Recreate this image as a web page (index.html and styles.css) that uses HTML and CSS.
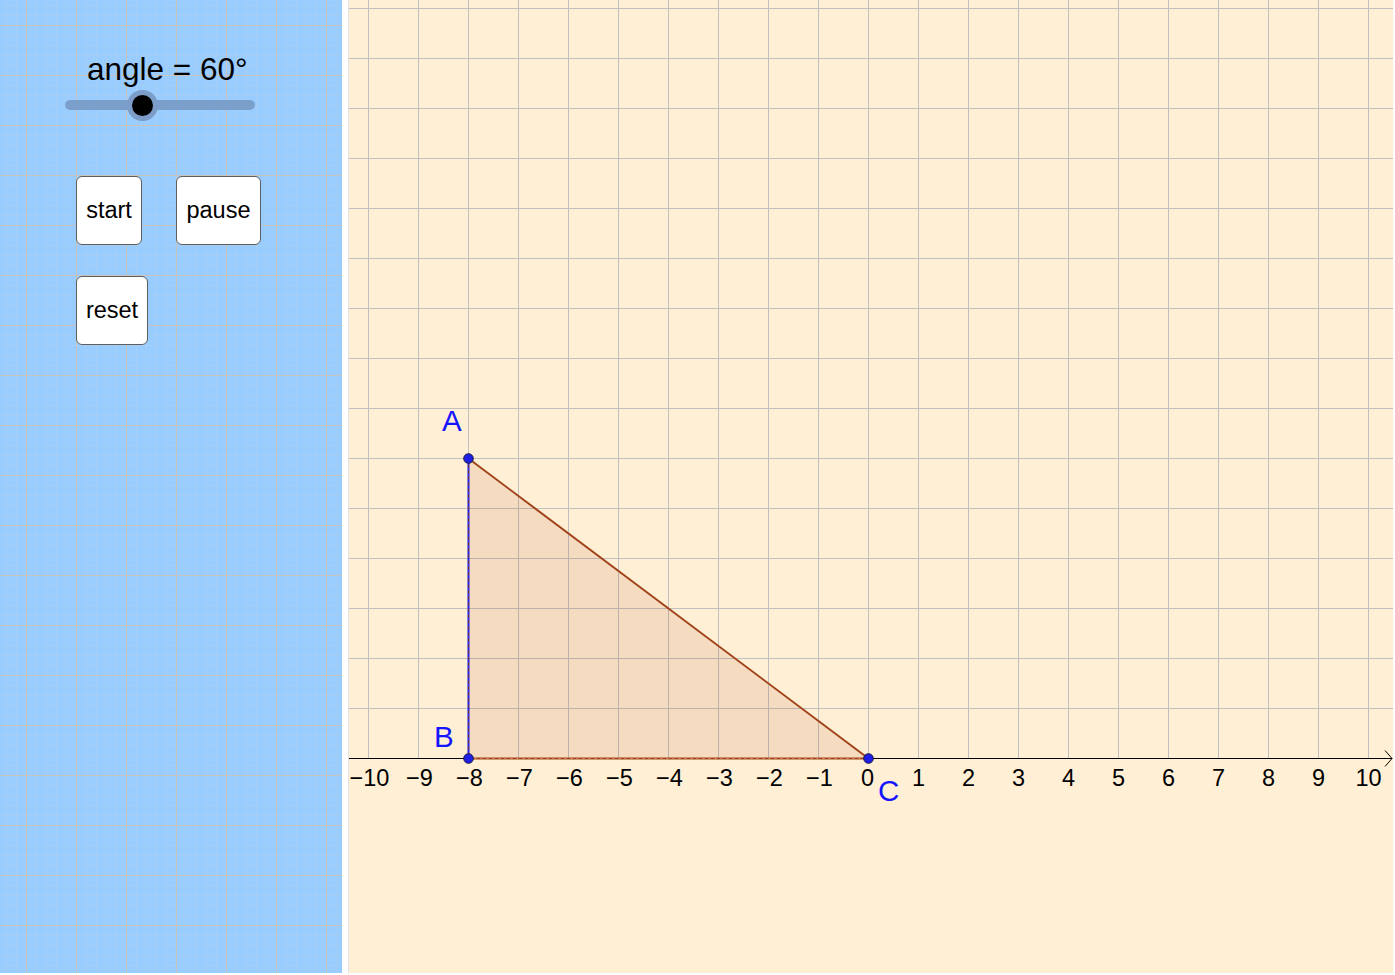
FILE: index.html
```html
<!DOCTYPE html>
<html>
<head>
<meta charset="utf-8">
<link rel="stylesheet" href="styles.css">
</head>
<body>
<div class="app">
  <aside class="panel">
    <div class="slider-label">angle = 60°</div>
    <div class="slider-track"><span class="knob"></span></div>
    <div class="btn-row first">
      <button class="btn btn-start">start</button>
      <button class="btn btn-pause">pause</button>
    </div>
    <div class="btn-row second">
      <button class="btn btn-reset">reset</button>
    </div>
  </aside>
  <main class="view">
    <svg class="graph" width="1044" height="973" viewBox="0 0 1044 973" xmlns="http://www.w3.org/2000/svg">
      <g class="grid" stroke="#C0C0C0" stroke-width="1">
        <line x1="19.5" y1="0" x2="19.5" y2="758"/>
        <line x1="69.5" y1="0" x2="69.5" y2="758"/>
        <line x1="119.5" y1="0" x2="119.5" y2="758"/>
        <line x1="169.5" y1="0" x2="169.5" y2="758"/>
        <line x1="219.5" y1="0" x2="219.5" y2="758"/>
        <line x1="269.5" y1="0" x2="269.5" y2="758"/>
        <line x1="319.5" y1="0" x2="319.5" y2="758"/>
        <line x1="369.5" y1="0" x2="369.5" y2="758"/>
        <line x1="419.5" y1="0" x2="419.5" y2="758"/>
        <line x1="469.5" y1="0" x2="469.5" y2="758"/>
        <line x1="519.5" y1="0" x2="519.5" y2="758"/>
        <line x1="569.5" y1="0" x2="569.5" y2="758"/>
        <line x1="619.5" y1="0" x2="619.5" y2="758"/>
        <line x1="669.5" y1="0" x2="669.5" y2="758"/>
        <line x1="719.5" y1="0" x2="719.5" y2="758"/>
        <line x1="769.5" y1="0" x2="769.5" y2="758"/>
        <line x1="819.5" y1="0" x2="819.5" y2="758"/>
        <line x1="869.5" y1="0" x2="869.5" y2="758"/>
        <line x1="919.5" y1="0" x2="919.5" y2="758"/>
        <line x1="969.5" y1="0" x2="969.5" y2="758"/>
        <line x1="1019.5" y1="0" x2="1019.5" y2="758"/>
        <line x1="0" y1="8.5" x2="1044" y2="8.5"/>
        <line x1="0" y1="58.5" x2="1044" y2="58.5"/>
        <line x1="0" y1="108.5" x2="1044" y2="108.5"/>
        <line x1="0" y1="158.5" x2="1044" y2="158.5"/>
        <line x1="0" y1="208.5" x2="1044" y2="208.5"/>
        <line x1="0" y1="258.5" x2="1044" y2="258.5"/>
        <line x1="0" y1="308.5" x2="1044" y2="308.5"/>
        <line x1="0" y1="358.5" x2="1044" y2="358.5"/>
        <line x1="0" y1="408.5" x2="1044" y2="408.5"/>
        <line x1="0" y1="458.5" x2="1044" y2="458.5"/>
        <line x1="0" y1="508.5" x2="1044" y2="508.5"/>
        <line x1="0" y1="558.5" x2="1044" y2="558.5"/>
        <line x1="0" y1="608.5" x2="1044" y2="608.5"/>
        <line x1="0" y1="658.5" x2="1044" y2="658.5"/>
        <line x1="0" y1="708.5" x2="1044" y2="708.5"/>
      </g>
      <g class="axis" stroke="#000" stroke-width="1" fill="none">
        <line x1="0" y1="758.5" x2="1043" y2="758.5"/>
        <polyline points="1036,750.5 1043,758.5 1036,766.5"/>
      </g>
      <g class="ticks" font-family="Liberation Sans, Arial, sans-serif" font-size="23.5" fill="#000" text-anchor="middle">
        <text x="20.5" y="786">−10</text>
        <text x="70.5" y="786">−9</text>
        <text x="120.5" y="786">−8</text>
        <text x="170.5" y="786">−7</text>
        <text x="220.5" y="786">−6</text>
        <text x="270.5" y="786">−5</text>
        <text x="320.5" y="786">−4</text>
        <text x="370.5" y="786">−3</text>
        <text x="420.5" y="786">−2</text>
        <text x="470.5" y="786">−1</text>
        <text x="518.5" y="786">0</text>
        <text x="569.5" y="786">1</text>
        <text x="619.5" y="786">2</text>
        <text x="669.5" y="786">3</text>
        <text x="719.5" y="786">4</text>
        <text x="769.5" y="786">5</text>
        <text x="819.5" y="786">6</text>
        <text x="869.5" y="786">7</text>
        <text x="919.5" y="786">8</text>
        <text x="969.5" y="786">9</text>
        <text x="1019.5" y="786">10</text>
      </g>
      <g class="triangle">
        <polygon points="119.5,458.5 119.5,758.5 519.5,758.5" fill="#993300" fill-opacity="0.1" stroke="none"/>
        <line x1="119.5" y1="458.5" x2="519.5" y2="758.5" stroke="#A0421A" stroke-width="2"/>
        <line x1="119.5" y1="758.5" x2="519.5" y2="758.5" stroke="#A0421A" stroke-width="2"/>
        <line x1="119.5" y1="758.5" x2="519.5" y2="758.5" stroke="#D98A4A" stroke-width="1.2" stroke-dasharray="2 4"/>
        <line x1="119.5" y1="458.5" x2="119.5" y2="758.5" stroke="#1E1EF0" stroke-width="2"/>
        <line x1="119.5" y1="458.5" x2="119.5" y2="758.5" stroke="#7A3A40" stroke-width="1.2" stroke-dasharray="3 3"/>
      </g>
      <g class="points" fill="#1E1EE6" stroke="#1A1A40" stroke-width="1">
        <circle cx="119.5" cy="458.5" r="4.8"/>
        <circle cx="119.5" cy="758.5" r="4.8"/>
        <circle cx="519.5" cy="758.5" r="4.8"/>
      </g>
      <g class="labels" font-family="Liberation Sans, Arial, sans-serif" font-size="29.5" fill="#1414FF">
        <text x="93" y="431">A</text>
        <text x="85" y="747">B</text>
        <text x="529" y="801">C</text>
      </g>
    </svg>
  </main>
</div>
</body>
</html>
```

FILE: styles.css
```css
html, body {
  margin: 0;
  padding: 0;
  background: #ffffff;
}

.app {
  display: flex;
  align-items: flex-start;
  width: 1395px;
  height: 975px;
  overflow: hidden;
}

.panel {
  box-sizing: border-box;
  width: 342px;
  height: 973px;
  flex: none;
  padding-top: 51px;
  background-color: #99CCFF;
  background-image:
    linear-gradient(to right, transparent 26px, #C9C3BF 26px, #C9C3BF 27px, transparent 27px),
    linear-gradient(to bottom, transparent 25px, #C9C3BF 25px, #C9C3BF 26px, transparent 26px),
    linear-gradient(to right, transparent 6px, #A6CDF4 6px, #A6CDF4 7px, transparent 7px),
    linear-gradient(to bottom, transparent 5px, #A6CDF4 5px, #A6CDF4 6px, transparent 6px);
  background-size: 50px 50px, 50px 50px, 10px 10px, 10px 10px;
  font-family: "Liberation Sans", Arial, sans-serif;
  color: #000;
}

.slider-label {
  margin-left: 87px;
  font-size: 31.5px;
  line-height: 36px;
  height: 36px;
  white-space: nowrap;
}

.slider-track {
  position: relative;
  margin-top: 13px;
  margin-left: 65px;
  width: 190px;
  height: 10px;
  border-radius: 5px;
  background: #7A9FCB;
}

.knob {
  position: absolute;
  left: 67px;
  top: -5.5px;
  width: 21px;
  height: 21px;
  border-radius: 50%;
  background: #000;
  box-shadow: 0 0 0 5px #7C9DC8;
}

.btn-row {
  display: flex;
  gap: 34px;
  margin-left: 76px;
}

.btn-row.first {
  margin-top: 66px;
}

.btn-row.second {
  margin-top: 31px;
}

.btn {
  box-sizing: border-box;
  height: 69px;
  padding: 0;
  border: 1px solid #5E5E5E;
  border-radius: 6px;
  background: #ffffff;
  font-family: "Liberation Sans", Arial, sans-serif;
  font-size: 23.5px;
  color: #000;
  text-align: center;
}

.btn-start { width: 66px; }
.btn-pause { width: 85px; }
.btn-reset { width: 72px; }

.view {
  flex: none;
  width: 1044px;
  height: 973px;
  margin-left: 6px;
  border-left: 1px solid #E2E2E2;
  background: #FFEFD5;
}

.graph {
  display: block;
}
```
